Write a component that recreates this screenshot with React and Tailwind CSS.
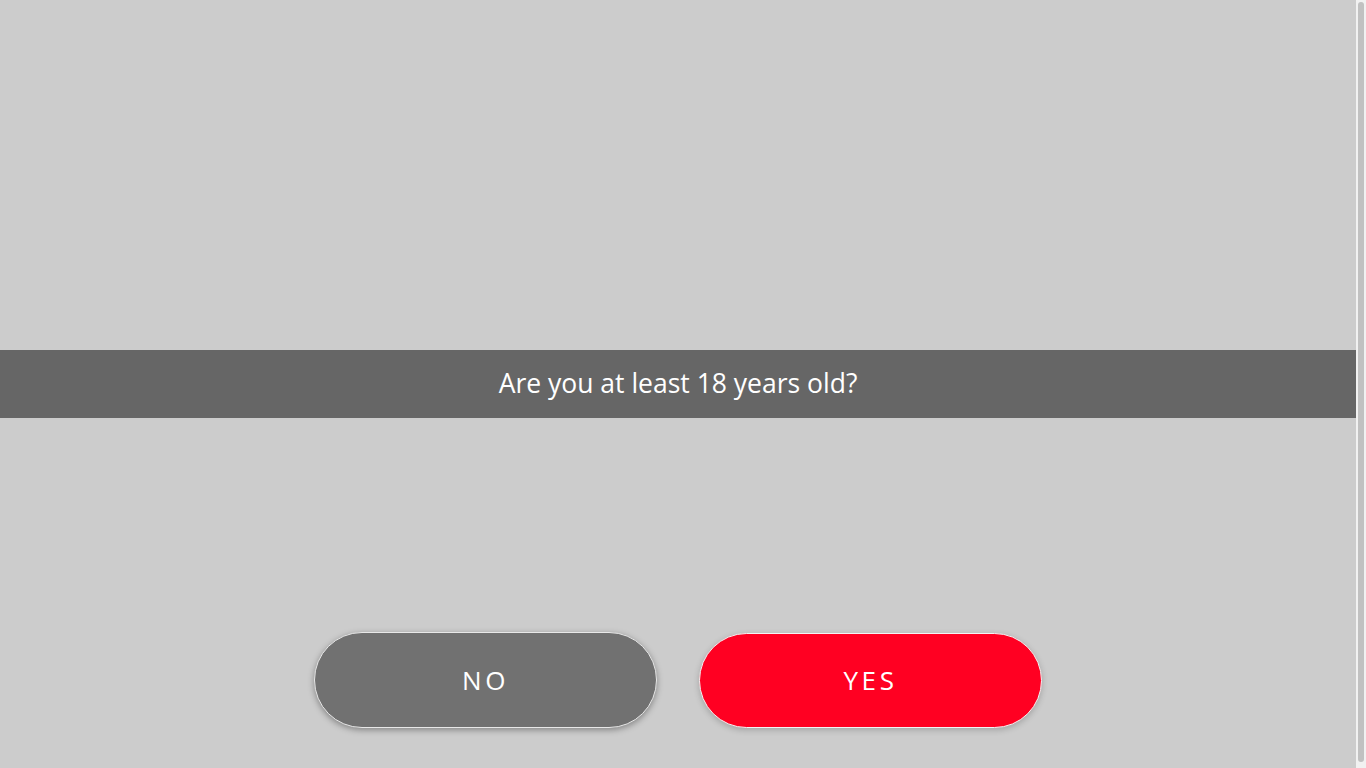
import React from 'react';

// pantalla de verificacion de edad
const App = () => {
  const handleAnswer = (ok) => {
    console.log(ok ? 'acceso permitido' : 'acceso denegado');
  };

  return (
    <div
      className="h-screen flex overflow-hidden bg-[#cccccc]"
      style={{ fontFamily: '"Open Sans", "Liberation Sans", sans-serif' }}
    >
      <main className="flex-1 pt-[350px]">
        {/* BANDA CON LA PREGUNTA */}
        <div className="h-[68px] bg-[#666666] flex items-center justify-center">
          <h1 className="text-[26.5px] text-white font-normal">Are you at least 18 years old?</h1>
        </div>

        {/* BOTONES */}
        <div className="mt-[214px] flex justify-center gap-[42px]">
          <button
            onClick={() => handleAnswer(false)}
            className="w-[343px] h-[96px] rounded-full bg-[#717171] border border-[#e8e8e8] text-white text-[26px] tracking-[0.14em] shadow-[0_2px_6px_rgba(0,0,0,0.35)]"
          >
            NO
          </button>
          <button
            onClick={() => handleAnswer(true)}
            className="w-[343px] h-[95px] mt-px rounded-full bg-[#ff0022] border border-[#f4f4f4] text-white text-[26px] tracking-[0.14em] shadow-[0_2px_6px_rgba(0,0,0,0.2)]"
          >
            YES
          </button>
        </div>
      </main>

      {/* barra de scroll */}
      <aside className="w-[10px] bg-[#f1f1f1] py-[2px] flex justify-center">
        <div className="w-[6px] h-[760px] rounded-full bg-[#c1c1c1]" />
      </aside>
    </div>
  );
};

export default App;
